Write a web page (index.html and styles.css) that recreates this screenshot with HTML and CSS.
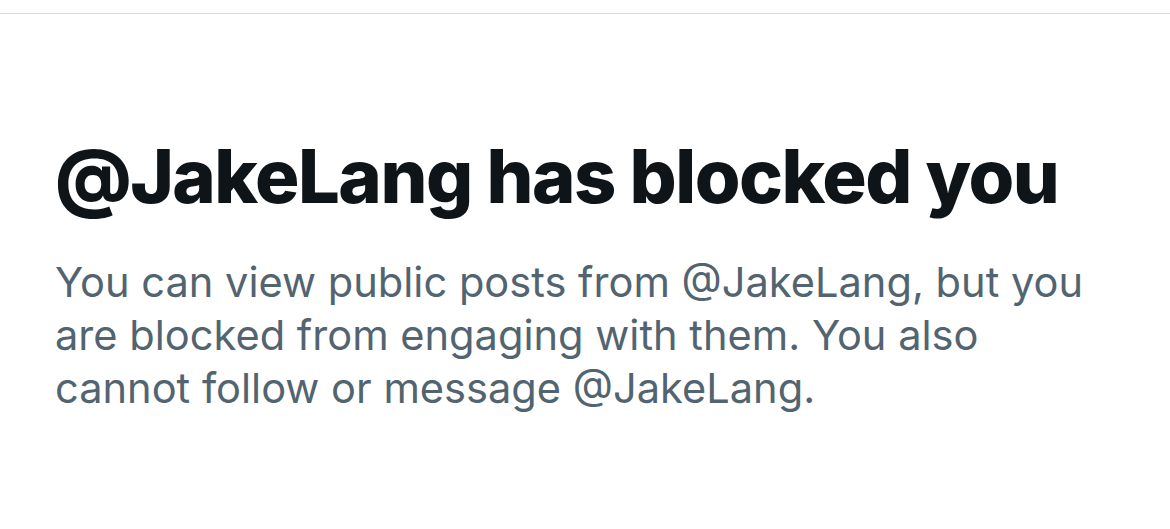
FILE: index.html
```html
<!DOCTYPE html>
<html lang="en">

<head>
    <meta charset="utf-8">
    <meta name="viewport" content="width=device-width, initial-scale=1.0">
    <title>Blocked</title>
    <link rel="stylesheet" href="styles.css">
</head>

<body>
    <div class="topbar"></div>

    <section class="blocked">
        <h1>@JakeLang has blocked you</h1>
        <p>You can view public posts from @JakeLang, but you are blocked from engaging with them. You also cannot follow or message @JakeLang.</p>
    </section>
</body>

</html>
```
FILE: styles.css
```css
body {
    margin: 0;
    background-color: #ffffff;
    font-family: Inter, "Liberation Sans", sans-serif;
}

.topbar {
    height: 13px;
    border-bottom: 1px solid #d9dcde;
}

.blocked {
    padding: 117px 70px 0 55px;
}

h1 {
    margin: 0;
    font-size: 74px;
    font-weight: 800;
    line-height: 90px;
    color: #0f1419;
    letter-spacing: -1.5px;
    white-space: nowrap;
}

p {
    margin: 35px 0 0 0;
    font-size: 41.6px;
    line-height: 53px;
    color: #536471;
}
```
